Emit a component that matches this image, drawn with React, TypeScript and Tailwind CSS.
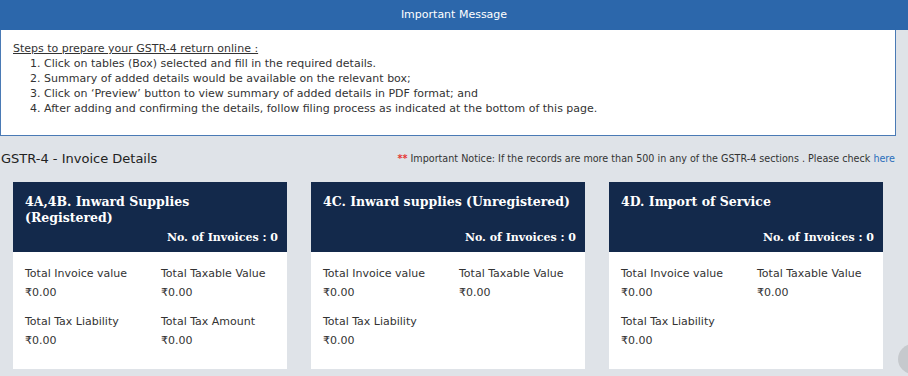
const cards = [
  {
    title: ["4A,4B. Inward Supplies", "(Registered)"],
    fields: [
      ["Total Invoice value", "Total Taxable Value"],
      ["Total Tax Liability", "Total Tax Amount"],
    ],
  },
  {
    title: ["4C. Inward supplies (Unregistered)"],
    fields: [["Total Invoice value", "Total Taxable Value"], ["Total Tax Liability"]],
  },
  {
    title: ["4D. Import of Service"],
    fields: [["Total Invoice value", "Total Taxable Value"], ["Total Tax Liability"]],
  },
];

const steps = [
  "Click on tables (Box) selected and fill in the required details.",
  "Summary of added details would be available on the relevant box;",
  "Click on \u2018Preview\u2019 button to view summary of added details in PDF format; and",
  "After adding and confirming the details, follow filing process as indicated at the bottom of this page.",
];

export default function App() {
  return (
    <div className="w-[908px] h-[376px] overflow-hidden bg-[#dfe3e8] text-[#333] relative font-['DejaVu_Sans',Verdana,sans-serif]">
      {/* Important message */}
      <div className="h-[30px] bg-[#2c67ab] text-white text-[11px] flex items-center justify-center">
        Important Message
      </div>
      <div className="w-[896px] h-[106px] bg-white border border-t-0 border-[#4a7ab5] pt-[11px] pl-[12px] text-[11px] leading-[15px]">
        <p className="underline">Steps to prepare your GSTR-4 return online :</p>
        <ol className="pl-[17px]">
          {steps.map((s, i) => (
            <li key={i}>
              {i + 1}. {s}
            </li>
          ))}
        </ol>
      </div>

      {/* Section heading */}
      <div className="flex items-center justify-between h-[46px] pl-[1px] pr-[13px]">
        <h2 className="text-[13px] text-[#222]">GSTR-4 - Invoice Details</h2>
        <p className="text-[9.6px] text-[#333]">
          <span className="text-[#e53935] font-bold">**</span> Important Notice: If the records are more than 500 in any of
          the GSTR-4 sections . Please check <span className="text-[#2a6ebb]">here</span>
        </p>
      </div>

      {/* Cards */}
      <div className="flex gap-[24px] pl-[13px]">
        {cards.map((c, i) => (
          <div key={i} className="w-[274px] flex flex-col">
            <div className="h-[70px] bg-[#13294b] text-white px-[12px] pt-[12px] pb-[7px] flex flex-col justify-between">
              <div className="font-['DejaVu_Serif',Georgia,serif] font-bold text-[12.5px] leading-[16px]">
                {c.title.map((t) => (
                  <div key={t}>{t}</div>
                ))}
              </div>
              <div className="text-right font-['DejaVu_Serif',Georgia,serif] font-bold text-[11px] leading-[14px] mr-[-3px]">
                No. of Invoices : 0
              </div>
            </div>
            <div className="h-[117px] bg-white px-[12px] pt-[12px] text-[11px] leading-[19px] flex flex-col gap-[10px]">
              {c.fields.map((row, r) => (
                <div key={r} className="grid grid-cols-[136px_1fr]">
                  {row.map((f) => (
                    <div key={f}>
                      <div>{f}</div>
                      <div>₹0.00</div>
                    </div>
                  ))}
                </div>
              ))}
            </div>
          </div>
        ))}
      </div>

      {/* scroll-to-top button peeking */}
      <div className="absolute left-[898px] top-[344px] w-[30px] h-[30px] rounded-full bg-[#c6c9cd]" />
    </div>
  );
}
